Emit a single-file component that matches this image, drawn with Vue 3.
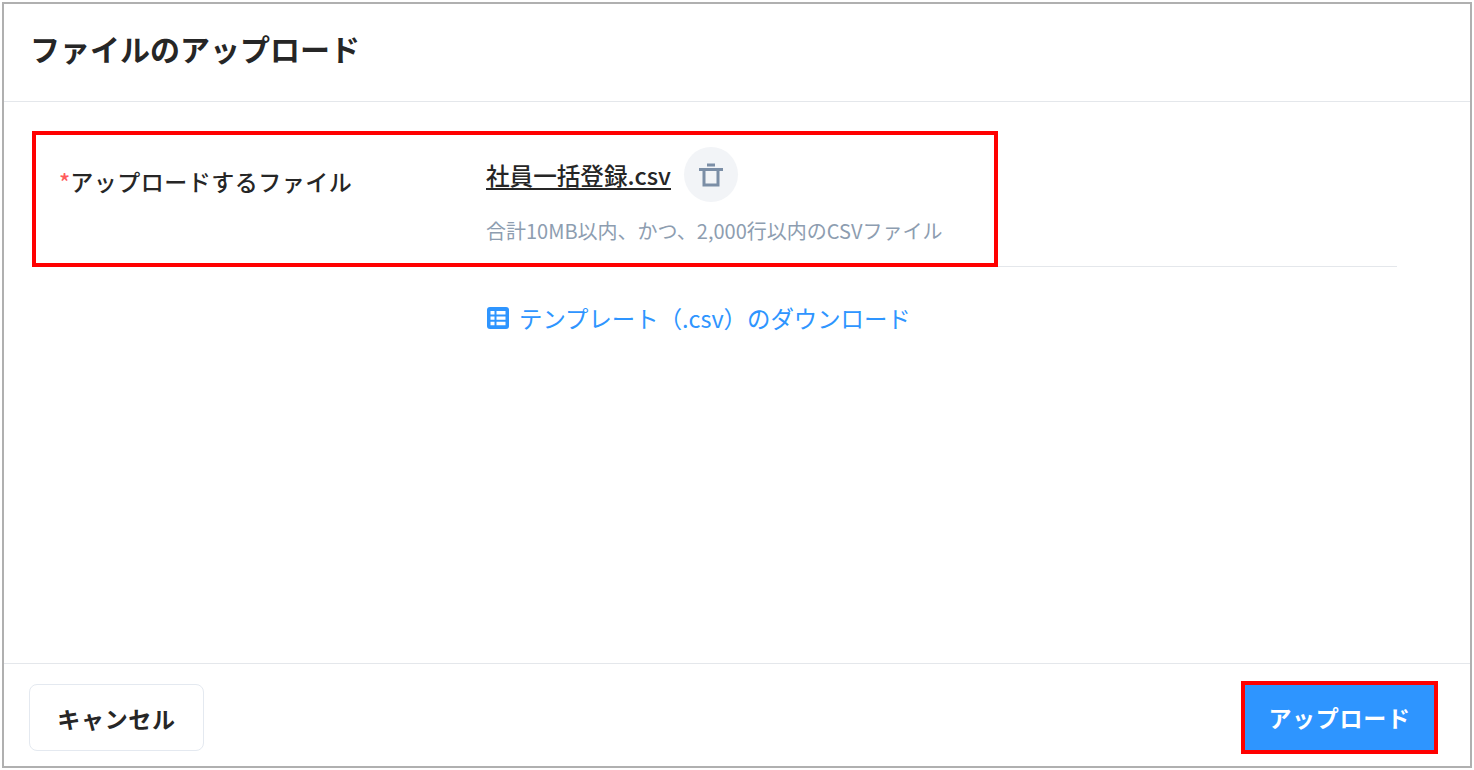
<template>
  <div class="dialog">
    <header class="dialog-header">
      <h1 class="dialog-title">ファイルのアップロード</h1>
    </header>

    <main class="dialog-body">
      <div class="form-row">
        <div class="form-label"><span class="required">*</span>アップロードするファイル</div>
        <div class="form-value">
          <div class="file-line">
            <a class="file-name">社員一括登録.csv</a>
            <button class="delete-btn" type="button">
              <svg width="26" height="26" viewBox="0 0 26 26" fill="none" stroke="#7b8ea6" stroke-width="3">
                <path d="M9 3h8" />
                <path d="M1 7.5h24" />
                <path d="M6 7.5v15.5h14V7.5" />
              </svg>
            </button>
          </div>
          <p class="file-hint">合計10MB以内、かつ、2,000行以内のCSVファイル</p>
        </div>
        <div class="highlight"></div>
      </div>

      <a class="template-link">
        <svg width="24" height="24" viewBox="0 0 24 24">
          <rect x="1" y="1" width="22" height="22" rx="3" fill="#2e95ff" />
          <path d="M4.5 5h4v3.4h-4zM10.5 5h9v3.4h-9zM4.5 10.4h4v3.4h-4zM10.5 10.4h9v3.4h-9zM4.5 15.8h4v3.4h-4zM10.5 15.8h9v3.4h-9z" fill="#fff" />
        </svg>
        <span>テンプレート（.csv）のダウンロード</span>
      </a>
    </main>

    <footer class="dialog-footer">
      <button class="btn btn-cancel" type="button">キャンセル</button>
      <button class="btn btn-upload" type="button">アップロード</button>
    </footer>
  </div>
</template>

<script setup>
</script>

<style>
html,
body {
  margin: 0;
  background: #fff;
}
</style>

<style scoped>
.dialog {
  box-sizing: border-box;
  width: 1470px;
  height: 766px;
  margin: 2px 0 0 2px;
  border: 2px solid #b0b0b0;
  display: flex;
  flex-direction: column;
  background: #fff;
  color: #262626;
  font-family: "Noto Sans CJK JP", "Noto Sans", sans-serif;
}

.dialog-header {
  box-sizing: border-box;
  height: 98px;
  flex: none;
  padding: 0 0 10px 26px;
  display: flex;
  align-items: center;
  border-bottom: 1px solid #e4e7eb;
}

.dialog-title {
  margin: 0;
  font-size: 30px;
  font-weight: 700;
  line-height: 40px;
}

.dialog-body {
  flex: 1;
  padding: 29px 73px 0 28px;
}

.form-row {
  position: relative;
  box-sizing: border-box;
  height: 136px;
  padding: 16px 0 0 27px;
  display: flex;
  border-bottom: 1px solid #e4e7eb;
}

.form-label {
  width: 427px;
  flex: none;
  padding-top: 18px;
  font-size: 23px;
  font-weight: 500;
  letter-spacing: 0.5px;
  line-height: 32px;
}

.required {
  color: #ff5c5c;
  letter-spacing: 0;
}

.file-line {
  display: flex;
  align-items: center;
  gap: 13px;
}

.file-name {
  font-size: 23.6px;
  font-weight: 500;
  line-height: 32px;
  text-decoration: underline;
  text-underline-offset: 3px;
}

.delete-btn {
  width: 54px;
  height: 55px;
  padding: 0;
  border: none;
  border-radius: 50%;
  background: #f2f4f7;
  display: flex;
  align-items: center;
  justify-content: center;
}

.file-hint {
  margin: 15px 0 0;
  color: #8d9db0;
  font-size: 20px;
  line-height: 28px;
}

.highlight {
  position: absolute;
  left: 0;
  top: 0;
  width: 966px;
  height: 136px;
  box-sizing: border-box;
  border: 4px solid #f00;
  pointer-events: none;
}

.template-link {
  display: flex;
  align-items: center;
  gap: 9px;
  margin: 34px 0 0 454px;
  color: #2e95ff;
  font-size: 23.4px;
  line-height: 34px;
}

.dialog-footer {
  box-sizing: border-box;
  height: 103px;
  flex: none;
  padding: 0 32px 0 25px;
  display: flex;
  align-items: center;
  justify-content: space-between;
  border-top: 1px solid #e4e7eb;
}

.btn {
  font-family: inherit;
  font-size: 23px;
  font-weight: 700;
  letter-spacing: 0.7px;
}

.btn-cancel {
  width: 175px;
  height: 67px;
  margin-top: 5px;
  border: 1px solid #e4e9f0;
  border-radius: 8px;
  background: #fff;
  color: #262626;
}

.btn-upload {
  width: 197px;
  height: 73px;
  margin-top: 4px;
  border: 4px solid #f00;
  background: #2e95ff;
  color: #fff;
}
</style>
